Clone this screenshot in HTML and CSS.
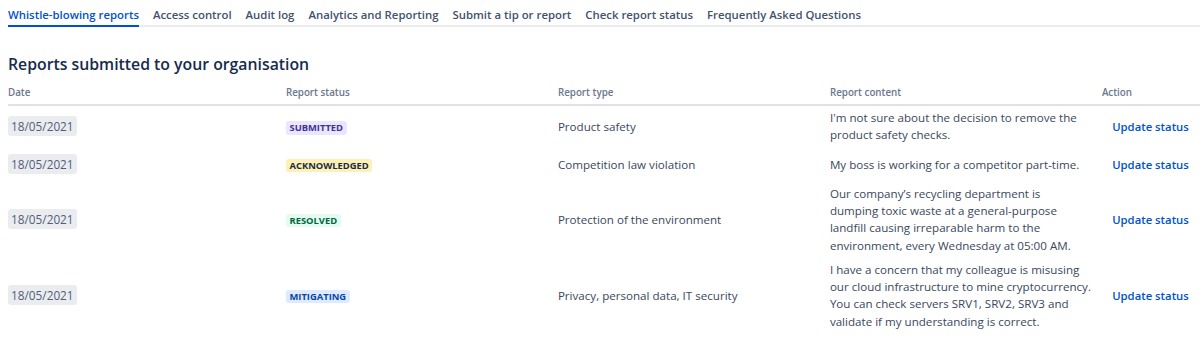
FILE: index.html
```html
<!DOCTYPE html>
<html lang="en">
<head>
<meta charset="utf-8">
<title>Whistle-blowing reports</title>
<link rel="stylesheet" href="styles.css">
</head>
<body>
<div class="page">
  <nav class="tabs">
    <a class="tab active" href="#">Whistle-blowing reports</a>
    <a class="tab" href="#">Access control</a>
    <a class="tab" href="#">Audit log</a>
    <a class="tab" href="#">Analytics and Reporting</a>
    <a class="tab" href="#">Submit a tip or report</a>
    <a class="tab" href="#">Check report status</a>
    <a class="tab" href="#">Frequently Asked Questions</a>
  </nav>

  <h1 class="title">Reports submitted to your organisation</h1>

  <table class="reports">
    <colgroup>
      <col class="c-date">
      <col class="c-status">
      <col class="c-type">
      <col class="c-content">
      <col class="c-action">
    </colgroup>
    <thead>
      <tr>
        <th>Date</th>
        <th>Report status</th>
        <th>Report type</th>
        <th>Report content</th>
        <th>Action</th>
      </tr>
    </thead>
    <tbody>
      <tr>
        <td><span class="date">18/05/2021</span></td>
        <td><span class="lozenge submitted">Submitted</span></td>
        <td>Product safety</td>
        <td class="content">I'm not sure about the decision to remove the<br>product safety checks.</td>
        <td><a class="action" href="#">Update status</a></td>
      </tr>
      <tr>
        <td><span class="date">18/05/2021</span></td>
        <td><span class="lozenge acknowledged">Acknowledged</span></td>
        <td>Competition law violation</td>
        <td class="content">My boss is working for a competitor part-time.</td>
        <td><a class="action" href="#">Update status</a></td>
      </tr>
      <tr>
        <td><span class="date">18/05/2021</span></td>
        <td><span class="lozenge resolved">Resolved</span></td>
        <td>Protection of the environment</td>
        <td class="content">Our company’s recycling department is<br>dumping toxic waste at a general-purpose<br>landfill causing irreparable harm to the<br>environment, every Wednesday at 05:00 AM.</td>
        <td><a class="action" href="#">Update status</a></td>
      </tr>
      <tr>
        <td><span class="date">18/05/2021</span></td>
        <td><span class="lozenge mitigating">Mitigating</span></td>
        <td>Privacy, personal data, IT security</td>
        <td class="content">I have a concern that my colleague is misusing<br>our cloud infrastructure to mine cryptocurrency.<br>You can check servers SRV1, SRV2, SRV3 and<br>validate if my understanding is correct.</td>
        <td><a class="action" href="#">Update status</a></td>
      </tr>
    </tbody>
  </table>
</div>
</body>
</html>
```
FILE: styles.css
```css
html, body {
  margin: 0;
  padding: 0;
  background: #ffffff;
}

body {
  font-family: "Open Sans", "Noto Sans", "Liberation Sans", sans-serif;
  color: #172b4d;
  overflow: hidden;
}

.page {
  padding-left: 8px;
}

/* Tabs */
.tabs {
  display: flex;
  gap: 14px;
  border-bottom: 2px solid #ebecf0;
}

.tab {
  font-size: 11.36px;
  font-weight: 600;
  line-height: 17px;
  padding: 6px 0 2px;
  margin-bottom: -2px;
  color: #42526e;
  text-decoration: none;
  border-bottom: 2px solid transparent;
  white-space: nowrap;
}

.tab.active {
  color: #0052cc;
  border-bottom-color: #0052cc;
}

/* Heading */
.title {
  font-size: 15.8px;
  font-weight: 600;
  line-height: 24px;
  margin: 25px 0 6px;
  color: #172b4d;
}

/* Table */
.reports {
  border-collapse: collapse;
  table-layout: fixed;
  width: 1192px;
}

.c-date { width: 271px; }
.c-status { width: 272px; }
.c-type { width: 272px; }
.c-content { width: 272px; }
.c-action { width: 105px; }

.reports th {
  font-size: 9.8px;
  font-weight: 600;
  line-height: 15px;
  color: #6b778c;
  text-align: left;
  padding: 3.4px 6.9px;
  border-bottom: 2px solid #dfe1e6;
}

.reports td {
  font-size: 11.6px;
  line-height: 17.3px;
  padding: 3.4px 6.9px;
  vertical-align: middle;
  color: #3a475c;
}

.reports td.content {
  white-space: nowrap;
}

.reports th:first-child,
.reports td:first-child {
  padding-left: 0;
}

.reports th:last-child,
.reports td:last-child {
  padding-right: 0;
}

.date {
  display: inline-block;
  background: #ebecf0;
  color: #505f79;
  border-radius: 3px;
  padding: 2px 3px;
  line-height: 16px;
  font-size: 11.8px;
}

.lozenge {
  display: inline-block;
  font-size: 9.4px;
  font-weight: 700;
  line-height: 13.7px;
  padding: 0 3.6px;
  border-radius: 3px;
  text-transform: uppercase;
  white-space: nowrap;
}

.lozenge.submitted { background: #eae6ff; color: #403294; }
.lozenge.acknowledged { background: #fff0b3; color: #172b4d; }
.lozenge.resolved { background: #e3fcef; color: #006644; }
.lozenge.mitigating { background: #deebff; color: #0747a6; }

.action {
  display: inline-flex;
  align-items: center;
  height: 27.4px;
  padding: 0 10.3px;
  font-size: 11.3px;
  font-weight: 600;
  color: #0052cc;
  text-decoration: none;
  white-space: nowrap;
}
```
